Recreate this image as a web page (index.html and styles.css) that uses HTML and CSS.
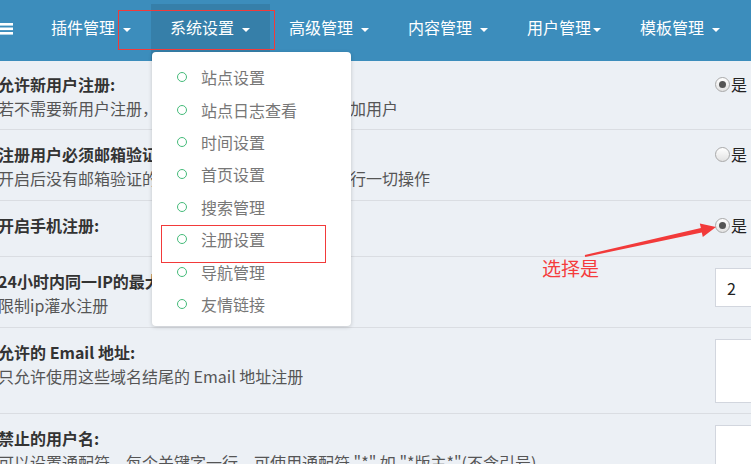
FILE: index.html
```html
<!DOCTYPE html>
<html lang="zh-CN">
<head>
    <meta charset="UTF-8">
    <meta name="viewport" content="width=device-width, initial-scale=1.0">
    <title>注册设置</title>
    <link rel="stylesheet" href="styles.css">
</head>
<body>
    <!-- Top Navigation -->
    <nav class="topnav">
        <span class="menu-toggle">
            <svg width="13" height="13" viewBox="0 0 13 13">
                <rect x="0" y="1" width="13" height="2.6" fill="#fff"/>
                <rect x="0" y="5.5" width="13" height="2.6" fill="#fff"/>
                <rect x="0" y="10" width="13" height="2.6" fill="#fff"/>
            </svg>
        </span>
        <ul class="nav-menu">
            <li class="nav-item">插件管理<i class="caret"></i></li>
            <li class="nav-item active">系统设置<i class="caret"></i>
                <ul class="dropdown">
                    <li><span class="dot"></span>站点设置</li>
                    <li><span class="dot"></span>站点日志查看</li>
                    <li><span class="dot"></span>时间设置</li>
                    <li><span class="dot"></span>首页设置</li>
                    <li><span class="dot"></span>搜索管理</li>
                    <li><span class="dot"></span>注册设置</li>
                    <li><span class="dot"></span>导航管理</li>
                    <li><span class="dot"></span>友情链接</li>
                </ul>
            </li>
            <li class="nav-item">高级管理<i class="caret"></i></li>
            <li class="nav-item">内容管理<i class="caret"></i></li>
            <li class="nav-item">用户管理<i class="caret tight"></i></li>
            <li class="nav-item">模板管理<i class="caret"></i></li>
        </ul>
    </nav>

    <!-- Settings List -->
    <div class="settings">
        <div class="row row-first">
            <div class="row-text">
                <div class="row-title">允许新用户注册:</div>
                <div class="row-desc">若不需要新用户注册，请选择否，站长可在后台添加用户</div>
            </div>
            <div class="row-control">
                <label class="radio-label"><span class="radio checked"></span>是</label>
            </div>
        </div>
        <div class="row">
            <div class="row-text">
                <div class="row-title">注册用户必须邮箱验证:</div>
                <div class="row-desc">开启后没有邮箱验证的用户将无法登录，也无法进行一切操作</div>
            </div>
            <div class="row-control">
                <label class="radio-label"><span class="radio"></span>是</label>
            </div>
        </div>
        <div class="row row-single">
            <div class="row-text">
                <div class="row-title">开启手机注册:</div>
            </div>
            <div class="row-control">
                <label class="radio-label"><span class="radio checked"></span>是</label>
            </div>
        </div>
        <div class="row">
            <div class="row-text">
                <div class="row-title">24小时内同一IP的最大注册次数:</div>
                <div class="row-desc">限制ip灌水注册</div>
            </div>
            <div class="row-control">
                <input class="text-input" type="text" value="2">
            </div>
        </div>
        <div class="row">
            <div class="row-text">
                <div class="row-title">允许的 Email 地址:</div>
                <div class="row-desc">只允许使用这些域名结尾的 Email 地址注册</div>
            </div>
            <div class="row-control">
                <textarea class="text-input text-area"></textarea>
            </div>
        </div>
        <div class="row">
            <div class="row-text">
                <div class="row-title">禁止的用户名:</div>
                <div class="row-desc">可以设置通配符，每个关键字一行，可使用通配符 "*" 如 "*版主*"(不含引号)</div>
            </div>
            <div class="row-control">
                <textarea class="text-input text-area"></textarea>
            </div>
        </div>
    </div>

    <!-- Screenshot annotations -->
    <div class="mark mark-nav"></div>
    <div class="mark mark-item"></div>
    <svg class="arrow" width="751" height="464" viewBox="0 0 751 464">
        <polygon fill="#f23a3a" points="584.8,255 700.9,228.1 699.8,223.4 716,227 702.8,237 701.8,232.6 585.2,257"/>
    </svg>
    <div class="note">选择是</div>
</body>
</html>
```

FILE: styles.css
```css
html, body {
    margin: 0;
    padding: 0;
    height: 100%;
    overflow: hidden;
}

body {
    position: relative;
    background-color: #ecf0f5;
    font-family: "Noto Sans CJK SC", "Microsoft YaHei", sans-serif;
    color: #333;
}

/* Top Navigation */
.topnav {
    display: flex;
    height: 61px;
    background-color: #3c8dbc;
}

.menu-toggle {
    width: 31.5px;
    padding-top: 22px;
    box-sizing: border-box;
}

.menu-toggle svg {
    display: block;
}

.nav-menu {
    display: flex;
    list-style: none;
    margin: 0;
    padding: 0;
}

.nav-item {
    position: relative;
    margin-top: 4px;
    padding: 13px 19.5px 0;
    font-size: 16px;
    line-height: 20px;
    color: #fff;
    white-space: nowrap;
}

.nav-item.active {
    background-color: #367fa9;
}

.caret {
    display: inline-block;
    width: 0;
    height: 0;
    margin-left: 8px;
    border-top: 4.5px solid #fff;
    border-left: 4.5px solid transparent;
    border-right: 4.5px solid transparent;
    vertical-align: middle;
}

.caret.tight {
    margin-left: 2px;
}

/* Dropdown */
.dropdown {
    position: absolute;
    top: 48px;
    left: 1px;
    z-index: 10;
    width: 199px;
    margin: 0;
    padding: 9px 0 6px;
    list-style: none;
    background: #fff;
    border-radius: 4px;
    box-shadow: 0 1px 4px rgba(0, 0, 0, 0.18);
}

.dropdown li {
    display: flex;
    align-items: center;
    height: 32.4px;
    padding-left: 25.5px;
    font-size: 16px;
    color: #777;
}

.dot {
    width: 10px;
    height: 10px;
    margin-right: 14px;
    border: 1.8px solid #45bb7a;
    border-radius: 50%;
    box-sizing: border-box;
}

/* Settings rows */
.row {
    display: flex;
    padding: 12px 0 10px;
    border-bottom: 1px solid #dadde2;
}

.row-first {
    padding-top: 11px;
    padding-bottom: 9px;
}

.row-single {
    padding-bottom: 19px;
}

.row-text {
    flex: 0 0 717px;
    margin-left: -2px;
    white-space: nowrap;
}

.row-title {
    font-size: 16px;
    font-weight: bold;
    line-height: 24px;
    color: #333;
}

.row-desc {
    font-size: 16px;
    line-height: 24px;
    color: #555;
}

.row-control {
    flex: 1;
    min-width: 0;
}

.radio-label {
    display: flex;
    align-items: center;
    height: 24px;
    font-size: 16px;
    color: #222;
}

.radio {
    display: flex;
    align-items: center;
    justify-content: center;
    width: 15px;
    height: 15px;
    margin-right: 1px;
    border: 1px solid #a9a9a9;
    border-radius: 50%;
    box-sizing: border-box;
    background: linear-gradient(#fff, #e2e2e2);
}

.radio.checked::after {
    content: "";
    width: 7px;
    height: 7px;
    border-radius: 50%;
    background: #555;
}

.text-input {
    display: block;
    width: 200px;
    height: 39px;
    margin: -1px 0 0;
    padding: 0 11px;
    border: 1px solid #d2d6de;
    box-sizing: border-box;
    background: #fff;
    font-family: inherit;
    font-size: 16px;
    color: #222;
    outline: none;
}

.text-area {
    height: 64px;
    resize: none;
}

/* Annotations */
.mark {
    position: absolute;
    z-index: 20;
    border: 1px solid #f23a3a;
}

.mark-nav {
    left: 118px;
    top: 10px;
    width: 155px;
    height: 38px;
}

.mark-item {
    left: 161px;
    top: 225px;
    width: 163px;
    height: 36px;
}

.arrow {
    position: absolute;
    left: 0;
    top: 0;
    z-index: 20;
}

.note {
    position: absolute;
    left: 542px;
    top: 258px;
    z-index: 20;
    font-size: 19px;
    line-height: 20px;
    color: #f53c3c;
}
```
